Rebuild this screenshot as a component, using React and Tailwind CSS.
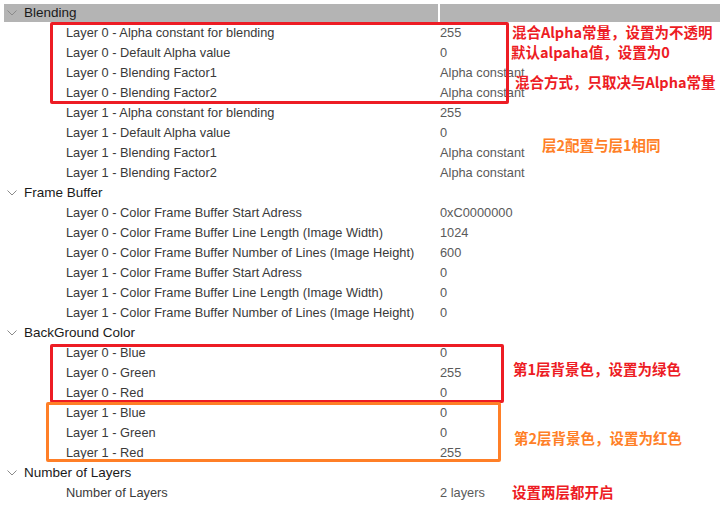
import React from "react";

const rows = [
  { cat: "Blending", active: true },
  { label: "Layer 0 - Alpha constant for blending", value: "255" },
  { label: "Layer 0 - Default Alpha value", value: "0" },
  { label: "Layer 0 - Blending Factor1", value: "Alpha constant" },
  { label: "Layer 0 - Blending Factor2", value: "Alpha constant" },
  { label: "Layer 1 - Alpha constant for blending", value: "255" },
  { label: "Layer 1 - Default Alpha value", value: "0" },
  { label: "Layer 1 - Blending Factor1", value: "Alpha constant" },
  { label: "Layer 1 - Blending Factor2", value: "Alpha constant" },
  { cat: "Frame Buffer" },
  { label: "Layer 0 - Color Frame Buffer Start Adress", value: "0xC0000000" },
  { label: "Layer 0 - Color Frame Buffer Line Length (Image Width)", value: "1024" },
  { label: "Layer 0 - Color Frame Buffer Number of Lines (Image Height)", value: "600" },
  { label: "Layer 1 - Color Frame Buffer Start Adress", value: "0" },
  { label: "Layer 1 - Color Frame Buffer Line Length (Image Width)", value: "0" },
  { label: "Layer 1 - Color Frame Buffer Number of Lines (Image Height)", value: "0" },
  { cat: "BackGround Color" },
  { label: "Layer 0 - Blue", value: "0" },
  { label: "Layer 0 - Green", value: "255" },
  { label: "Layer 0 - Red", value: "0" },
  { label: "Layer 1 - Blue", value: "0" },
  { label: "Layer 1 - Green", value: "0" },
  { label: "Layer 1 - Red", value: "255" },
  { cat: "Number of Layers" },
  { label: "Number of Layers", value: "2 layers" },
];

const notes = [
  { text: "混合Alpha常量，设置为不透明", x: "left-[512px]", y: "top-[23px]", color: "text-[#ed1c24]" },
  { text: "默认alpaha值，设置为0", x: "left-[511px]", y: "top-[43px]", color: "text-[#ed1c24]" },
  { text: "混合方式，只取决与Alpha常量", x: "left-[515px]", y: "top-[73px]", color: "text-[#ed1c24]" },
  { text: "层2配置与层1相同", x: "left-[542px]", y: "top-[136px]", color: "text-[#ff7f27]" },
  { text: "第1层背景色，设置为绿色", x: "left-[513px]", y: "top-[360px]", color: "text-[#ed1c24]" },
  { text: "第2层背景色，设置为红色", x: "left-[514px]", y: "top-[429px]", color: "text-[#ff7f27]" },
  { text: "设置两层都开启", x: "left-[512px]", y: "top-[483px]", color: "text-[#ed1c24]" },
];

const Chevron = () => (
  <svg width="10" height="6" viewBox="0 0 10 6" className="ml-[3px] mr-[7px]">
    <path d="M0.5 0.5 L5 5 L9.5 0.5" fill="none" stroke="#8a8a8a" strokeWidth="1" />
  </svg>
);

export default function App() {
  return (
    <div className="relative w-[720px] h-[506px] bg-white overflow-hidden font-['Liberation_Sans',Arial,sans-serif] text-[12.8px]">
      <div className="pt-[3px]">
        {rows.map((r, i) =>
          r.cat ? (
            <div key={i} className="flex h-5 items-center pl-[4px]">
              <div
                className={`flex h-[18px] w-[434px] items-center ${r.active ? "bg-[#b4b4b4]" : ""}`}
              >
                <Chevron />
                <span className="text-[13.5px] text-[#1a1a1a]">{r.cat}</span>
              </div>
              <div className={`ml-[2px] h-[18px] flex-1 ${r.active ? "bg-[#b4b4b4]" : ""}`} />
            </div>
          ) : (
            <div key={i} className="flex h-5 items-center">
              <div className="w-[440px] pl-[66px] text-[#3a3a3a] whitespace-nowrap">{r.label}</div>
              <div className="text-[#5a5a5a] whitespace-nowrap">{r.value}</div>
            </div>
          )
        )}
      </div>

      <div className="absolute left-[50px] top-[22px] w-[459px] h-[82px] border-[3px] border-[#ed1c24] rounded-[2px]" />
      <div className="absolute left-[50px] top-[344px] w-[454px] h-[59px] border-[3px] border-[#ed1c24] rounded-[2px]" />
      <div className="absolute left-[46px] top-[402px] w-[455px] h-[60px] border-[3px] border-[#ff7f27] rounded-[2px]" />

      {notes.map((n, i) => (
        <div
          key={i}
          className={`absolute ${n.x} ${n.y} ${n.color} font-bold text-[14.5px] leading-[18px] whitespace-nowrap font-['Noto_Sans_CJK_SC',sans-serif]`}
        >
          {n.text}
        </div>
      ))}
    </div>
  );
}
